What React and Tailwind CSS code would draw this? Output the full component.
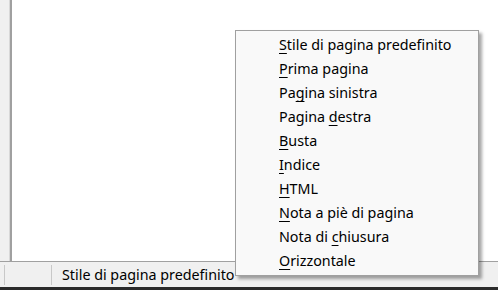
export default function App() {
  const items = [
    ["", "S", "tile di pagina predefinito"],
    ["", "P", "rima pagina"],
    ["Pa", "g", "ina sinistra"],
    ["Pagina ", "d", "estra"],
    ["", "B", "usta"],
    ["", "I", "ndice"],
    ["", "H", "TML"],
    ["", "N", "ota a piè di pagina"],
    ["Nota di ", "c", "hiusura"],
    ["", "O", "rizzontale"],
  ];
  return (
    <div
      className="relative w-[498px] h-[290px] flex flex-col overflow-hidden bg-white text-black"
      style={{ fontFamily: '"Noto Sans", sans-serif' }}
    >
      <div className="flex flex-1 min-h-0">
        <div className="w-[10px] bg-[#f0f0f0] border-r border-[#d8d8d8]" />
        <div className="w-[2px] bg-[#a0a0a0]" />
        <div className="flex-1 bg-white" />
      </div>
      <div className="h-[26px] border-t border-[#a0a0a0] bg-[#f0f0f0] flex items-center text-[14.3px]">
        <div className="w-[4px] h-full" />
        <div className="w-px h-[20px] bg-[#c8c8c8]" />
        <div className="w-[46px]" />
        <div className="w-px h-[20px] bg-[#c8c8c8]" />
        <div className="pl-[10px]">Stile di pagina predefinito</div>
      </div>
      <div className="h-[3px] bg-[#2b2b2b]" />

      <div className="absolute left-[235px] top-[30px] w-[244px] h-[246px] bg-[#f9f9f9] border border-[#a0a0a0] shadow-[3px_3px_3px_rgba(0,0,0,0.35)] py-[2px] text-[14.3px]">
        {items.map((it, i) => (
          <div key={i} className="h-[24px] flex items-center pl-[43px]">
            <span className="whitespace-pre">
              {it[0]}
              <span className="underline underline-offset-[3px] decoration-1">{it[1]}</span>
              {it[2]}
            </span>
          </div>
        ))}
      </div>
    </div>
  );
}
